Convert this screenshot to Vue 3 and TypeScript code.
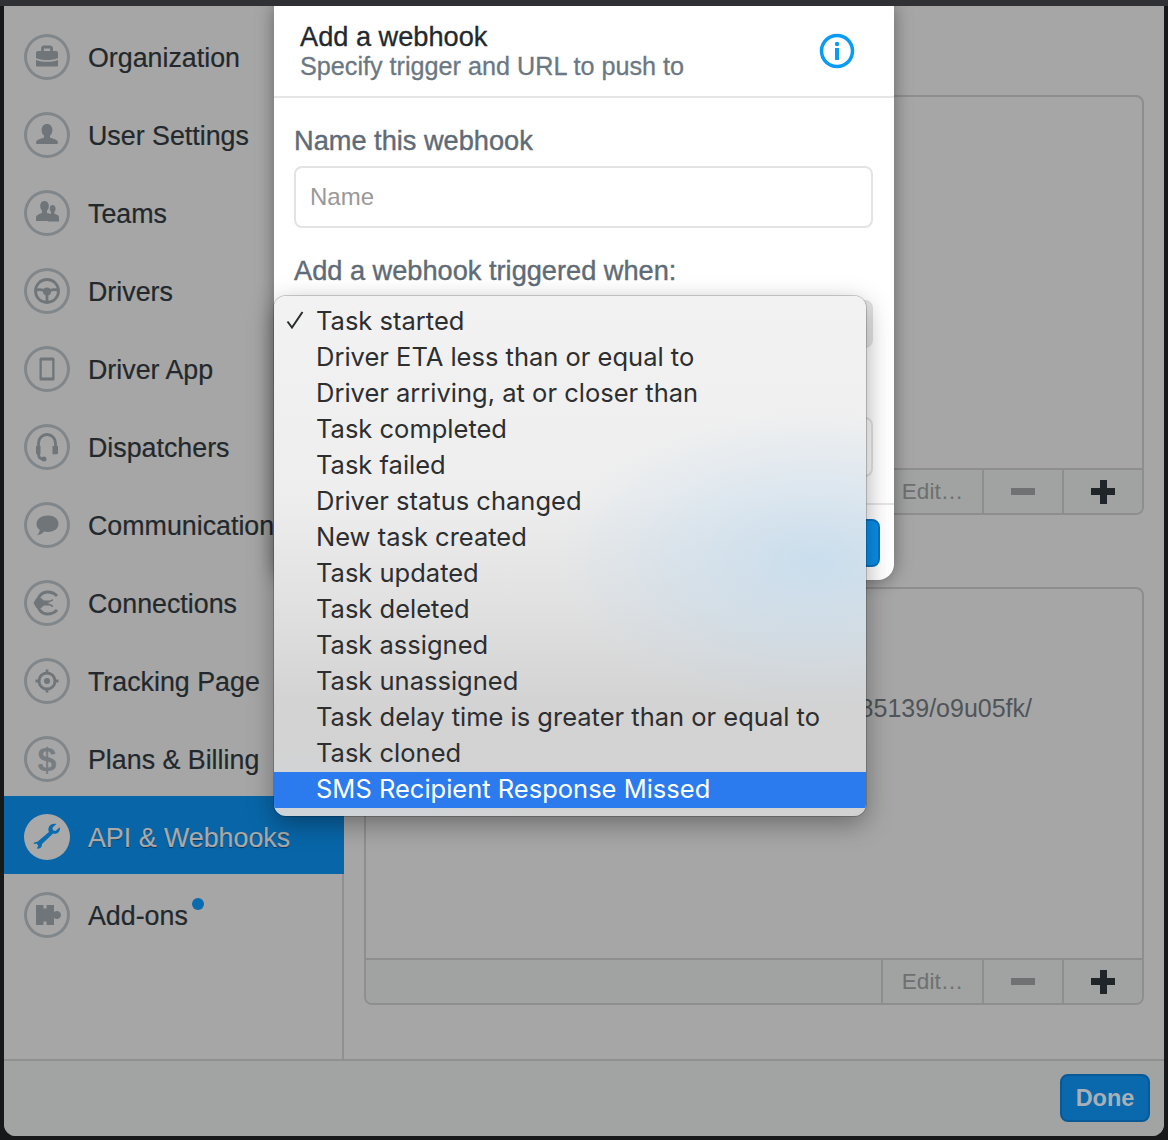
<script setup lang="ts">
interface Shape {
  d: string
  line?: boolean
}
interface NavItem {
  label: string
  shapes: Shape[]
  glyph?: string
  active?: boolean
  dot?: boolean
}

const navItems: NavItem[] = [
  {
    label: 'Organization',
    shapes: [
      { d: 'M12 19a2 2 0 0 1 2-2h18a2 2 0 0 1 2 2v5c-3 1.500-7 2-11 2s-8-.5-11-2zM12 26c3 1.300 7 1.800 11 1.800s8-.5 11-1.800v5.500a1 1 0 0 1-1 1H13a1 1 0 0 1-1-1z' },
      { d: 'M18.500 17v-2.500a1.500 1.500 0 0 1 1.500-1.500h6a1.500 1.500 0 0 1 1.500 1.500V17', line: true },
    ],
  },
  {
    label: 'User Settings',
    shapes: [
      { d: 'M23 12c3.400 0 5.400 2.700 5.400 6 0 2.600-1 4.600-2.400 5.600v2c2 1.200 8 1.500 8 5.200 0 .7-.4 1.200-1 1.200H13c-.6 0-1-.5-1-1.200 0-3.700 6-4 8-5.200v-2c-1.400-1-2.400-3-2.400-5.600 0-3.300 2-6 5.400-6z' },
    ],
  },
  {
    label: 'Teams',
    shapes: [
      { d: 'M20.500 11c2.700 0 4.300 2.300 4.300 5 0 2-.8 3.700-1.800 4.600v2.400c3 .8 5.500 1.300 5.500 4v4H12v-3.500c0-3 4.500-3.700 6-4.500v-2.400c-1-.9-1.800-2.600-1.800-4.600 0-2.700 1.600-5 4.300-5z' },
      { d: 'M28.500 15c1.900 0 3.100 1.700 3.100 3.700 0 1.400-.5 2.500-1.200 3.200v1.800c2 .7 4.600 1.200 4.600 3.600v4.200H24V25c1-1 2.500-1.300 3-1.500v-1.700c-.7-.7-1.200-1.700-1.200-3.100 0-2 .9-3.700 2.700-3.700z' },
    ],
  },
  {
    label: 'Drivers',
    shapes: [
      { d: 'M34.500 23a11.500 11.500 0 1 1-23 0a11.500 11.500 0 1 1 23 0z', line: true },
      { d: 'M12 22c3-.5 5.500-.5 8 .5M34 22c-3-.5-5.500-.5-8 .5M23 26v8', line: true },
      { d: 'M27 23.500a4 4 0 1 1-8 0a4 4 0 1 1 8 0z' },
    ],
  },
  {
    label: 'Driver App',
    shapes: [{ d: 'M17 11.500h12a1.500 1.500 0 0 1 1.500 1.500v20a1.500 1.500 0 0 1-1.500 1.500H17a1.500 1.500 0 0 1-1.500-1.500V13a1.500 1.500 0 0 1 1.500-1.500zM17.800 14.500v17h10.400v-17z' }],
  },
  {
    label: 'Dispatchers',
    shapes: [
      { d: 'M14.500 24v-5a8.500 8.500 0 0 1 17 0v5', line: true },
      { d: 'M12 22h4.500v8.300H13a1 1 0 0 1-1-1zM28.500 22H34v7.300a1 1 0 0 1-1 1h-4.500z' },
      { d: 'M14.500 30c0 3 1.500 5 5 5', line: true },
      { d: 'M22.500 35a2.500 2.500 0 1 1-5 0a2.500 2.500 0 1 1 5 0z' },
    ],
  },
  {
    label: 'Communication',
    shapes: [{ d: 'M24 13.500c6 0 10.500 3.500 10.500 8.300S30 30 24 30c-1.400 0-2.700-.2-3.900-.5-1.800 2-4.100 3.400-7.100 3.800 1.500-1.300 2.400-3 2.800-5.200-2.200-1.500-3.300-3.700-3.300-6.300 0-4.800 5.400-8.300 11.500-8.300z' }],
  },
  {
    label: 'Connections',
    shapes: [
      { d: 'M33 16c-2.500-2.700-6-4-9.500-4-6 0-10 5-10 11s4 11 10 11c3.500 0 7-1.300 9.500-4', line: true },
      { d: 'M9.500 23l3-5h4.500l3 2.500h6c2-1 3-1.500 3-1.500v1.500c-1.500 1-3 1.500-5 2.500 2 1 3.500 1.500 5 2.500v1.500c-1 0-2-.5-3-1.500h-6l-3 2.500h-4.500z' },
    ],
  },
  {
    label: 'Tracking Page',
    shapes: [
      { d: 'M31 23a8 8 0 1 1-16 0a8 8 0 1 1 16 0zM23 11.500v4M23 30.500v4M11.500 23h4M30.500 23h4', line: true },
      { d: 'M26 23a3 3 0 1 1-6 0a3 3 0 1 1 6 0z' },
    ],
  },
  { label: 'Plans & Billing', shapes: [], glyph: '$' },
  {
    label: 'API & Webhooks',
    active: true,
    shapes: [
      { d: 'M35.800 13.300l-4.300 3.800-2.500-.8-.6-2.600 4-3.600c-3-.8-6.200.2-7.500 2.900-.8 1.700-.7 3.400 0 4.900L13.500 27.800c-3 .1-4 1.100-3.800 2.200l2.800-.4 1.800 2.100-1.500 2.800c3 .7 5.400-1.100 5.200-4.500l11.100-10.500c3.600 1.400 7.700-1.800 6.700-6.200z' },
    ],
  },
  {
    label: 'Add-ons',
    dot: true,
    shapes: [{ d: 'M12 13h7.500v3.500h3V13H30v7c1-.7 2-1 3-1 2.200 0 4 1.800 4 4s-1.800 4-4 4c-1 0-2-.3-3-1v7h-7.500v-3.500h-3V33H12z' }],
  },
]

const triggers = [
  'Task started',
  'Driver ETA less than or equal to',
  'Driver arriving, at or closer than',
  'Task completed',
  'Task failed',
  'Driver status changed',
  'New task created',
  'Task updated',
  'Task deleted',
  'Task assigned',
  'Task unassigned',
  'Task delay time is greater than or equal to',
  'Task cloned',
  'SMS Recipient Response Missed',
]
</script>

<template>
  <div class="screen">
    <div class="window">
      <div class="window-body">
        <aside class="sidebar">
          <div
            v-for="item in navItems"
            :key="item.label"
            class="nav-row"
            :class="{ active: item.active }"
          >
            <span class="nav-icon">
              <svg viewBox="0 0 46 46" width="46" height="46">
                <template v-for="shape in item.shapes" :key="shape.d">
                  <path :d="shape.d" :class="shape.line ? 'icon-line' : 'icon-fill'" />
                </template>
                <text v-if="item.glyph" x="23" y="34.500" text-anchor="middle" class="icon-glyph">{{ item.glyph }}</text>
              </svg>
            </span>
            <span class="nav-label">{{ item.label }}</span>
            <span v-if="item.dot" class="nav-dot"></span>
          </div>
        </aside>

        <main class="content">
          <section class="box box-keys">
            <div class="box-rows"></div>
            <div class="box-tools">
              <span class="tool tool-edit">Edit…</span>
              <span class="tool"><i class="minus"></i></span>
              <span class="tool"><i class="plus"></i></span>
            </div>
          </section>
          <section class="box box-hooks">
            <div class="box-rows">
              <div class="hook-url">3285139/o9u05fk/</div>
            </div>
            <div class="box-tools">
              <span class="tool tool-edit">Edit…</span>
              <span class="tool"><i class="minus"></i></span>
              <span class="tool"><i class="plus"></i></span>
            </div>
          </section>
        </main>
      </div>
      <footer class="window-foot">
        <button class="done" type="button">Done</button>
      </footer>
    </div>

    <div class="sheet">
      <header class="sheet-head">
        <div>
          <div class="sheet-title">Add a webhook</div>
          <div class="sheet-sub">Specify trigger and URL to push to</div>
        </div>
        <svg class="info" viewBox="0 0 36 36" width="36" height="36">
          <circle cx="18" cy="18" r="15.500" fill="none" stroke="#0a9bf5" stroke-width="3.500" />
          <circle cx="18" cy="11" r="2.200" fill="#0a9bf5" />
          <rect x="16" y="15" width="4" height="12" fill="#0a9bf5" />
        </svg>
      </header>
      <div class="sheet-body">
        <label class="field-label">Name this webhook</label>
        <div class="field"><span class="placeholder">Name</span></div>
        <label class="field-label second">Add a webhook triggered when:</label>
        <div class="select"></div>
        <div class="field url"></div>
      </div>
      <div class="sheet-foot">
        <button class="save" type="button"></button>
      </div>
    </div>

    <ul class="menu">
      <li v-for="(name, i) in triggers" :key="name" class="menu-row" :class="{ hot: i === triggers.length - 1 }">
        <span class="check">
          <svg v-if="i === 0" viewBox="0 0 18 18" width="18" height="18">
            <path d="M1.500 10.500L6 16.500L16.500 1" fill="none" stroke="#2a2c2e" stroke-width="2" />
          </svg>
        </span>
        <span>{{ name }}</span>
      </li>
    </ul>
  </div>
</template>

<style>
html,
body {
  margin: 0;
  background: #16181a;
}
</style>

<style scoped>
.screen {
  position: relative;
  width: 1168px;
  height: 1140px;
  overflow: hidden;
  box-sizing: border-box;
  background: #16181a;
  border-top: 6px solid #2f3134;
  font-family: "Liberation Sans", Arial, sans-serif;
}
.window {
  display: flex;
  flex-direction: column;
  width: 1160px;
  height: 1130px;
  margin-left: 4px;
  background: #a6a6a6;
  border-radius: 0 0 12px 12px;
}
.window-body {
  display: flex;
  flex: 1;
  min-height: 0;
}
.sidebar {
  width: 340px;
  padding-top: 10px;
  box-sizing: border-box;
  border-right: 2px solid #909090;
}
.nav-row {
  position: relative;
  display: flex;
  align-items: center;
  gap: 18px;
  height: 78px;
  width: 340px;
  padding: 4px 0 0 20px;
  box-sizing: border-box;
  color: #22282c;
  font-size: 26.800px;
  -webkit-text-stroke: 0.2px #22282c;
  white-space: nowrap;
}
.nav-label {
  padding-top: 2px;
}
.nav-row.active {
  background: #0866a8;
  color: #a9a9a9;
  -webkit-text-stroke: 0.2px #a9a9a9;
  text-shadow: 0 1px 1px rgba(0, 0, 0, 0.5);
}
.nav-icon {
  flex: none;
  width: 46px;
  height: 46px;
  border-radius: 50%;
  box-shadow: inset 0 0 0 3px #81868a;
}
.nav-row.active .nav-icon {
  background: #a9a9a9;
  box-shadow: none;
}
.nav-icon svg {
  display: block;
}
.icon-fill {
  fill: #6f7579;
}
.icon-line {
  fill: none;
  stroke: #6f7579;
  stroke-width: 2.800;
}
.nav-row.active .icon-fill {
  fill: #0a6cb0;
}
.icon-glyph {
  fill: #777d81;
  stroke: none;
  font-size: 34px;
  font-weight: 700;
}
.nav-dot {
  position: absolute;
  left: 188px;
  top: 24px;
  width: 12px;
  height: 12px;
  border-radius: 50%;
  background: #0a6cb0;
}
.content {
  flex: 1;
  padding: 89px 20px 0 20px;
  display: flex;
  flex-direction: column;
  gap: 72px;
}
.box {
  display: flex;
  flex-direction: column;
  height: 420px;
  box-sizing: border-box;
  border: 2px solid #8e8e8e;
  border-radius: 8px;
}
.box-hooks {
  height: 418px;
}
.box-rows {
  flex: 1;
}
.hook-url {
  padding: 106px 110px 0 0;
  text-align: right;
  color: #4f5558;
  font-size: 25px;
  line-height: 26px;
  white-space: nowrap;
}
.box-tools {
  display: flex;
  justify-content: flex-end;
  height: 45px;
  border-top: 2px solid #8e8e8e;
  box-sizing: border-box;
  background: #a1a3a2;
  border-radius: 0 0 6px 6px;
}
.tool {
  display: flex;
  align-items: center;
  justify-content: center;
  width: 80px;
  box-sizing: border-box;
  border-left: 2px solid #8e8e8e;
}
.tool-edit {
  width: 101px;
  color: #6d7071;
  font-size: 22.500px;
}
.minus {
  display: block;
  width: 24px;
  height: 7px;
  background: #6f7173;
}
.plus {
  display: block;
  width: 24px;
  height: 24px;
  background:
    linear-gradient(#1f2528, #1f2528) center / 24px 7px no-repeat,
    linear-gradient(#1f2528, #1f2528) center / 7px 24px no-repeat;
}
.window-foot {
  display: flex;
  justify-content: flex-end;
  align-items: flex-start;
  height: 77px;
  padding: 13px 14px 0 0;
  box-sizing: border-box;
  border-top: 2px solid #909090;
  background: #a2a4a3;
  border-radius: 0 0 12px 12px;
}
.done {
  width: 90px;
  height: 48px;
  border: 2px solid #085a96;
  border-radius: 8px;
  background: #0a69ad;
  color: #a9b0b5;
  font: 700 23.500px "Liberation Sans", Arial, sans-serif;
}
.sheet {
  position: absolute;
  left: 274px;
  top: 0;
  width: 620px;
  height: 574px;
  background: #fff;
  border-radius: 0 0 16px 16px;
  box-shadow: 0 0 18px rgba(0, 0, 0, 0.4);
  display: flex;
  flex-direction: column;
}
.sheet-head {
  display: flex;
  align-items: center;
  justify-content: space-between;
  height: 92px;
  padding: 0 39px 0 26px;
  box-sizing: border-box;
  border-bottom: 2px solid #e6e6e6;
}
.sheet-title {
  color: #23292e;
  font-size: 27.200px;
  line-height: 30px;
  -webkit-text-stroke: 0.3px #23292e;
}
.sheet-sub {
  color: #6b7883;
  font-size: 25.200px;
  line-height: 28px;
  -webkit-text-stroke: 0.3px #6b7883;
}
.sheet-body {
  flex: 1;
  padding: 28px 21px 0 20px;
}
.field-label {
  display: block;
  color: #5f6b76;
  font-size: 27.200px;
  line-height: 30px;
  -webkit-text-stroke: 0.4px #5f6b76;
}
.field-label.second {
  margin-top: 28px;
}
.field {
  display: flex;
  align-items: center;
  height: 62px;
  margin-top: 10px;
  padding-left: 14px;
  box-sizing: border-box;
  border: 2px solid #e3e3e3;
  border-radius: 8px;
}
.field.url {
  height: 60px;
  margin-top: 69px;
}
.placeholder {
  color: #999;
  font-size: 24px;
}
.select {
  height: 48px;
  margin-top: 14px;
  box-sizing: border-box;
  border: 2px solid #e3e3e3;
  border-radius: 8px;
  background: #e8e8e8;
}
.sheet-foot {
  display: flex;
  justify-content: flex-end;
  height: 77px;
  padding: 14px 14px 0 0;
  box-sizing: border-box;
  border-top: 2px solid #e6e6e6;
}
.save {
  width: 110px;
  height: 48px;
  border: 2px solid #0772c0;
  border-radius: 8px;
  background: #0a8ee8;
}
.menu {
  position: absolute;
  left: 274px;
  top: 290px;
  width: 592px;
  height: 520px;
  margin: 0;
  padding: 8px 0 0;
  box-sizing: border-box;
  list-style: none;
  border-radius: 12px;
  box-shadow: 0 0 0 1px rgba(0, 0, 0, 0.18), 0 8px 26px rgba(0, 0, 0, 0.35);
  background:
    radial-gradient(ellipse 260px 150px at 540px 265px, rgba(190, 218, 240, 0.7), rgba(190, 218, 240, 0) 100%),
    radial-gradient(ellipse 200px 70px at 60px 520px, rgba(200, 215, 230, 0.4), rgba(200, 215, 230, 0) 100%),
    linear-gradient(#f2f2f2 0%, #eeeeee 38%, #e2e2e2 58%, #d3d3d3 78%, #d2d2d2 100%);
  font-family: Inter, "Liberation Sans", sans-serif;
  overflow: hidden;
}
.menu-row {
  display: flex;
  align-items: center;
  height: 36px;
  padding-bottom: 4px;
  box-sizing: border-box;
  color: #2c2e30;
  font-size: 25.500px;
  white-space: nowrap;
}
.menu-row.hot {
  background: #2b7bef;
  color: #fff;
}
.check {
  display: flex;
  align-items: center;
  flex: none;
  width: 42px;
  padding-left: 12px;
  box-sizing: border-box;
}
</style>
